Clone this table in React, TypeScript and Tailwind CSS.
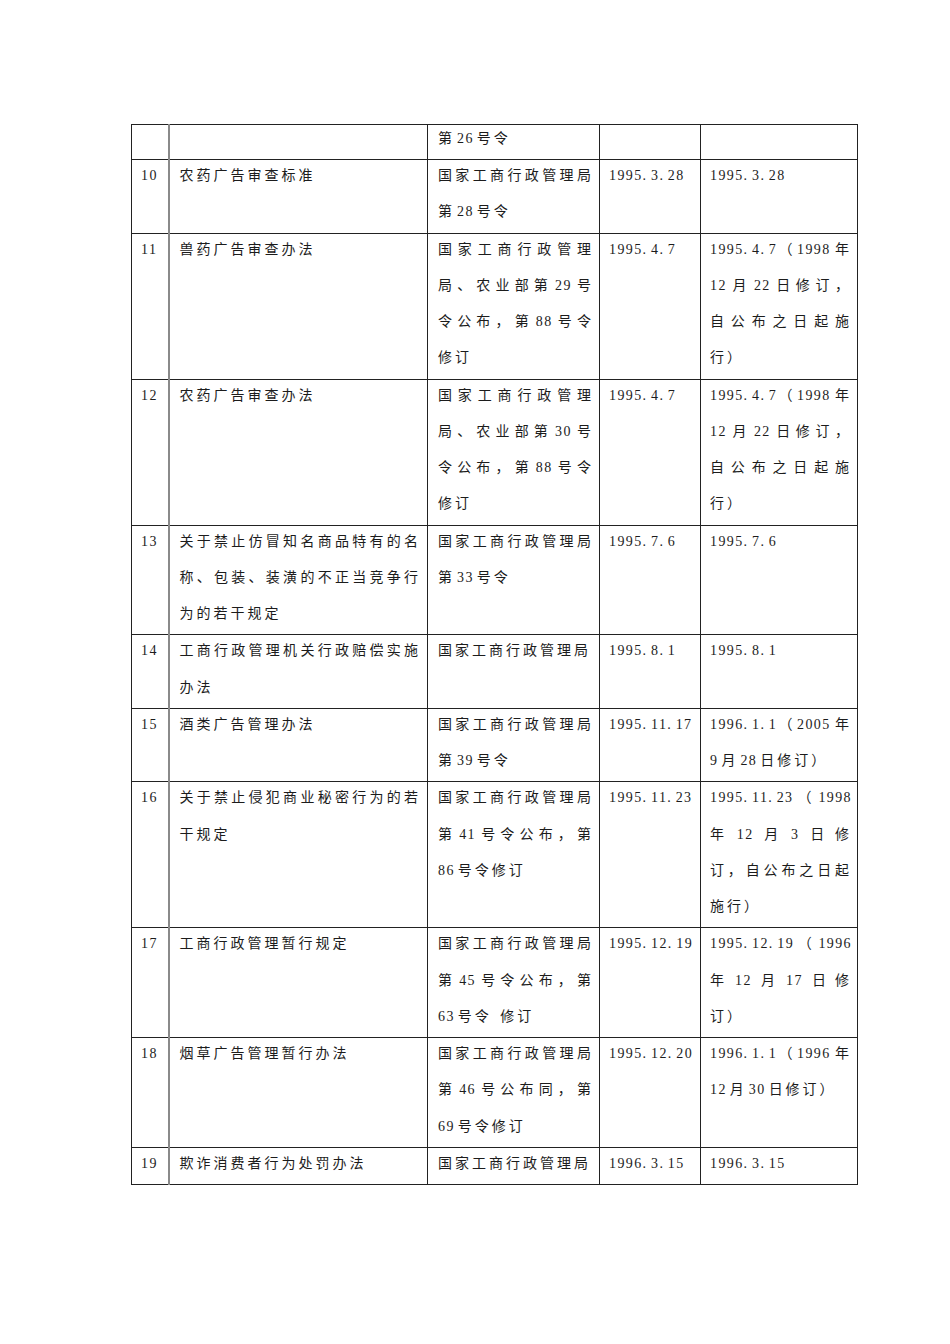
import clsx from "clsx";

type Row = {
  no: string;
  name: string[];
  org: string[];
  pub: string;
  eff: string[];
  first?: boolean;
};

const rows: Row[] = [
  { no: "", name: [], org: ["第26号令"], pub: "", eff: [], first: true },
  { no: "10", name: ["农药广告审查标准"], org: ["国家工商行政管理局", "第28号令"], pub: "1995.3.28", eff: ["1995.3.28"] },
  {
    no: "11",
    name: ["兽药广告审查办法"],
    org: ["国家工商行政管理", "局、农业部第29号", "令公布，第88号令", "修订"],
    pub: "1995.4.7",
    eff: ["1995.4.7（1998年", "12月22日修订，", "自公布之日起施", "行）"],
  },
  {
    no: "12",
    name: ["农药广告审查办法"],
    org: ["国家工商行政管理", "局、农业部第30号", "令公布，第88号令", "修订"],
    pub: "1995.4.7",
    eff: ["1995.4.7（1998年", "12月22日修订，", "自公布之日起施", "行）"],
  },
  {
    no: "13",
    name: ["关于禁止仿冒知名商品特有的名", "称、包装、装潢的不正当竞争行", "为的若干规定"],
    org: ["国家工商行政管理局", "第33号令"],
    pub: "1995.7.6",
    eff: ["1995.7.6"],
  },
  { no: "14", name: ["工商行政管理机关行政赔偿实施", "办法"], org: ["国家工商行政管理局"], pub: "1995.8.1", eff: ["1995.8.1"] },
  {
    no: "15",
    name: ["酒类广告管理办法"],
    org: ["国家工商行政管理局", "第39号令"],
    pub: "1995.11.17",
    eff: ["1996.1.1（2005年", "9月28日修订）"],
  },
  {
    no: "16",
    name: ["关于禁止侵犯商业秘密行为的若", "干规定"],
    org: ["国家工商行政管理局", "第41号令公布，第", "86号令修订"],
    pub: "1995.11.23",
    eff: ["1995.11.23（1998", "年12月3日修", "订，自公布之日起", "施行）"],
  },
  {
    no: "17",
    name: ["工商行政管理暂行规定"],
    org: ["国家工商行政管理局", "第45号令公布，第", "63号令 修订"],
    pub: "1995.12.19",
    eff: ["1995.12.19（1996", "年12月17日修", "订）"],
  },
  {
    no: "18",
    name: ["烟草广告管理暂行办法"],
    org: ["国家工商行政管理局", "第46号公布同，第", "69号令修订"],
    pub: "1995.12.20",
    eff: ["1996.1.1（1996年", "12月30日修订）"],
  },
  { no: "19", name: ["欺诈消费者行为处罚办法"], org: ["国家工商行政管理局"], pub: "1996.3.15", eff: ["1996.3.15"] },
];

const isHan = (c?: string) => !!c && /[\u4e00-\u9fff]/.test(c);

// half-width cell: serif digits at 7px + 1.4px tracking; dots and spaces padded to the same cell
function Latin({ text }: { text: string }) {
  return (
    <>
      {text.split(/([. ])/).filter(Boolean).map((c, i) =>
        c === "." || c === " " ? (
          <span key={i} className="pr-[3.5px]">
            {c}
          </span>
        ) : (
          <span key={i}>{c}</span>
        )
      )}
    </>
  );
}

// CJK runs get the wide grid spacing, latin runs stay tight with a little autospace
function Runs({ text }: { text: string }) {
  const parts = text.split(/([\x20-\x7e]+)/).filter(Boolean);
  return (
    <>
      {parts.map((p, i) => {
        if (/^[\x20-\x7e]+$/.test(p)) {
          const blank = p.trim() === "";
          const prev = parts[i - 1];
          const next = parts[i + 1];
          return (
            <span
              key={i}
              className={clsx(
                "font-['Liberation_Serif',serif] tracking-[1.4px]",
                !blank && isHan(prev?.slice(-1)) && "ml-[2px]",
                !blank && isHan(next?.[0]) && "mr-[3px]"
              )}
            >
              <Latin text={p} />
            </span>
          );
        }
        return (
          <span key={i} className="tracking-[3px]">
            {p}
          </span>
        );
      })}
    </>
  );
}

function Lines({ lines, first }: { lines: string[]; first?: boolean }) {
  return (
    <>
      {lines.map((l, i) => (
        <div
          key={i}
          className={clsx(
            "whitespace-nowrap",
            first ? "h-[34px] leading-[24px]" : "h-[36.25px] leading-[28px]",
            i < lines.length - 1 ? "[text-align-last:justify] text-justify" : "text-left"
          )}
        >
          <Runs text={l} />
        </div>
      ))}
    </>
  );
}

export default function App() {
  return (
    <div className="min-h-[1344px] w-[950px] bg-white pt-[124px] pl-[131px] font-['Noto_Sans_CJK_SC',serif] text-[14px] text-[#1c1c1c]">
      <table className="table-fixed border-collapse border border-[#222]">
        <colgroup>
          <col className="w-[37px]" />
          <col className="w-[259px]" />
          <col className="w-[172px]" />
          <col className="w-[101px]" />
          <col className="w-[157px]" />
        </colgroup>
        <tbody>
          {rows.map((r, i) => (
            <tr key={i}>
              <td className="border border-[#222] border-r-2 border-r-[#8a8a8a] pl-[9px] pr-0 align-top">
                <Lines lines={r.no ? [r.no] : []} first={r.first} />
              </td>
              <td className="border border-[#222] pl-[10px] pr-[6px] align-top">
                <Lines lines={r.name} first={r.first} />
              </td>
              <td className="border border-[#222] pl-[10px] pr-[5px] align-top">
                <Lines lines={r.org} first={r.first} />
              </td>
              <td className="border border-[#222] pl-[9px] pr-[3px] align-top">
                <Lines lines={r.pub ? [r.pub] : []} first={r.first} />
              </td>
              <td className="border border-[#222] pl-[9px] pr-[5px] align-top">
                <Lines lines={r.eff} first={r.first} />
              </td>
            </tr>
          ))}
        </tbody>
      </table>
    </div>
  );
}
